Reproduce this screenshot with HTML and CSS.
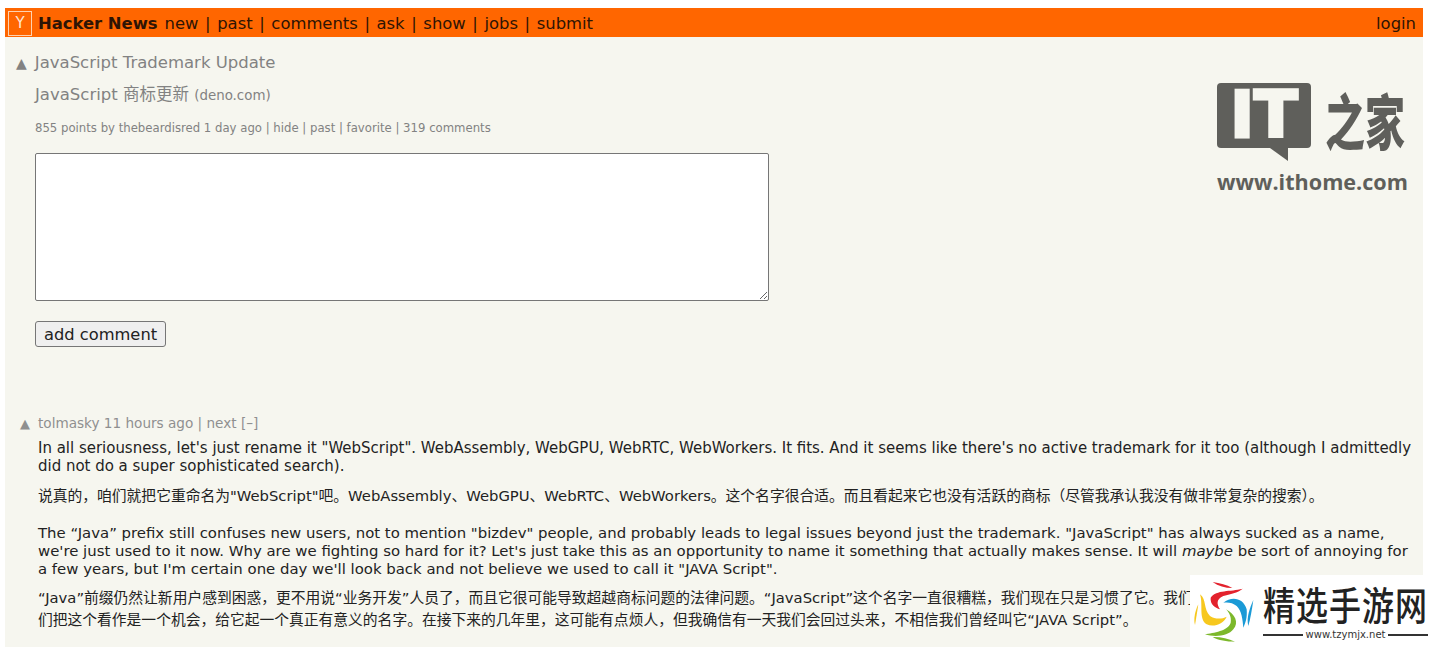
FILE: index.html
```html
<!DOCTYPE html>
<html lang="zh">
<head>
    <meta charset="UTF-8">
    <meta name="viewport" content="width=device-width, initial-scale=1.0">
    <title>JavaScript Trademark Update</title>
    <link rel="stylesheet" href="styles.css">
</head>
<body>
    <div class="page">
        <!-- top bar -->
        <div class="topbar">
            <span class="y-logo">Y</span>
            <b class="brand">Hacker News</b>
            <span class="nav">new | past | comments | ask | show | jobs | submit</span>
            <span class="login">login</span>
        </div>

        <!-- story -->
        <div class="story">
            <div class="story-title"><span class="arrow">▲</span>JavaScript Trademark Update</div>
            <div class="story-cn">JavaScript 商标更新 <span class="site">(deno.com)</span></div>
            <div class="subtext">855 points by thebeardisred 1 day ago | hide | past | favorite | 319 comments</div>
            <textarea class="reply-box"></textarea>
            <button class="add-btn">add comment</button>
        </div>

        <!-- comment -->
        <div class="comment">
            <div class="comment-head"><span class="arrow-small">▲</span>tolmasky 11 hours ago | next [–]</div>
            <div class="comment-body">
                <p class="en">In all seriousness, let's just rename it "WebScript". WebAssembly, WebGPU, WebRTC, WebWorkers. It fits. And it seems like there's no active trademark for it too (although I admittedly did not do a super sophisticated search).</p>
                <p class="cn cn-gap">说真的，咱们就把它重命名为"WebScript"吧。WebAssembly、WebGPU、WebRTC、WebWorkers。这个名字很合适。而且看起来它也没有活跃的商标（尽管我承认我没有做非常复杂的搜索）。</p>
                <p class="en en-tight">The “Java” prefix still confuses new users, not to mention "bizdev" people, and probably leads to legal issues beyond just the trademark. "JavaScript" has always sucked as a name, we're just used to it now. Why are we fighting so hard for it? Let's just take this as an opportunity to name it something that actually makes sense. It will <i>maybe</i> be sort of annoying for a few years, but I'm certain one day we'll look back and not believe we used to call it "JAVA Script".</p>
                <!-- the rest of this line is covered by the watermark in the screenshot -->
                <p class="cn">“Java”前缀仍然让新用户感到困惑，更不用说“业务开发”人员了，而且它很可能导致超越商标问题的法律问题。“JavaScript”这个名字一直很糟糕，我们现在只是习惯了它。我们<br>们把这个看作是一个机会，给它起一个真正有意义的名字。在接下来的几年里，这可能有点烦人，但我确信有一天我们会回过头来，不相信我们曾经叫它“JAVA Script”。</p>
            </div>
        </div>
    </div>

    <!-- watermarks -->
    <div class="ithome">
        <div class="ithome-top">
            <div class="bubble">IT</div>
            <span class="ithome-cn">之家</span>
        </div>
        <div class="ithome-url">www.ithome.com</div>
    </div>

    <div class="tzy">
        <svg class="tzy-icon" width="70" height="70" viewBox="0 0 210 210">
            <path d="M68 18 C90 22 110 26 127 36 C105 36 85 30 68 18Z" fill="#e3222d"/>
            <path d="M158 38 C120 48 80 40 62 65 C60 85 75 95 90 100 C80 85 78 70 100 60 C125 52 145 50 158 38Z" fill="#e3222d"/>
            <path d="M100 80 C125 60 160 65 170 100 C172 125 167 140 160 155 C158 130 155 105 140 90 C128 80 115 78 100 80Z" fill="#1a9ad6"/>
            <path d="M190 72 C180 95 168 125 175 150 C182 125 186 100 190 72Z" fill="#1a9ad6"/>
            <path d="M108 100 C135 115 148 140 130 160 C115 180 75 185 45 175 C70 170 115 165 122 140 C125 125 118 110 108 100Z" fill="#7cb82b"/>
            <path d="M68 183 C90 182 115 188 135 197 C110 197 85 193 68 183Z" fill="#7cb82b"/>
            <path d="M30 55 C50 70 40 100 60 120 C75 130 95 130 110 122 C100 145 70 155 50 145 C25 130 40 85 30 55Z" fill="#f7c81e"/>
            <path d="M25 85 C22 105 18 130 15 147 C10 130 15 105 25 85Z" fill="#f7c81e"/>
        </svg>
        <div class="tzy-text">
            <div class="tzy-name">精选手游网</div>
            <div class="tzy-url">www.tzymjx.net</div>
        </div>
    </div>
</body>
</html>
```

FILE: styles.css
```css
html, body {
    height: 100%;
}
body {
    margin: 0;
    padding: 8px 17px 0 5px;
    box-sizing: border-box;
    background-color: #fff;
    overflow: hidden;
    font-family: "DejaVu Sans", Verdana, "Noto Sans CJK SC", sans-serif;
    font-size: 15px;
}
.page {
    background-color: #f6f6ef;
    height: 100%;
}

/* top bar */
.topbar {
    display: flex;
    align-items: center;
    height: 29px;
    background-color: #ff6600;
    color: #2e1405;
    font-size: 16.4px;
    padding: 1px 7px 0 3px;
    box-sizing: border-box;
}
.y-logo {
    width: 22px;
    height: 23px;
    border: 1px solid #ffd2b0;
    color: #ffe6d5;
    font-size: 15px;
    text-align: center;
    line-height: 23px;
    margin-right: 6px;
}
.brand {
    margin-right: 7px;
    font-size: 16.4px;
}
.nav {
    word-spacing: 1.4px;
}
.login {
    margin-left: auto;
}

/* story */
.story {
    padding: 16px 0 0 30px;
    height: 356px;
    box-sizing: border-box;
    color: #828282;
}
.story-title {
    font-size: 16.5px;
    line-height: 20px;
}
.arrow {
    font-size: 14px;
    margin-left: -19px;
    margin-right: 8px;
}
.story-cn {
    font-size: 16.5px;
    line-height: 20px;
    margin-top: 12px;
}
.site {
    font-size: 13.4px;
}
.subtext {
    font-size: 11.7px;
    line-height: 14px;
    margin-top: 15px;
}
.reply-box {
    display: block;
    width: 734px;
    height: 148px;
    box-sizing: border-box;
    margin-top: 18px;
    border: 1px solid #767676;
    border-radius: 2px;
    background-color: #fff;
}
.add-btn {
    display: block;
    width: 131px;
    height: 26px;
    margin-top: 20px;
    padding: 0;
    font-family: inherit;
    font-size: 16.3px;
    color: #222;
    background-color: #efefef;
    border: 1px solid #767676;
    border-radius: 3px;
}

/* comment */
.comment {
    padding: 22px 5px 0 33px;
}
.comment-head {
    font-size: 13.6px;
    line-height: 16px;
    color: #8f8f8f;
}
.arrow-small {
    font-size: 13px;
    margin-left: -18px;
    margin-right: 8px;
}
.comment-body {
    margin-top: 7px;
    font-size: 14.98px;
    line-height: 18px;
    color: #222;
}
.comment-body p {
    margin: 0;
}
.comment-body .en {
    margin-bottom: 10px;
}
.comment-body .en-tight {
    font-size: 14.9px;
    margin-bottom: 9px;
}
.cn {
    font-size: 14.78px;
    line-height: 22px;
}
.comment-body .cn-gap {
    margin-bottom: 17px;
}

/* watermarks */
.ithome {
    position: absolute;
    left: 1217px;
    top: 83px;
    width: 192px;
    color: #5f5f5b;
}
.ithome-top {
    display: flex;
    align-items: flex-start;
}
.bubble {
    position: relative;
    width: 94px;
    height: 65px;
    background-color: #5f5f5b;
    border-radius: 4px;
    color: #f6f6ef;
    font-family: "DejaVu Sans", sans-serif;
    font-weight: bold;
    font-size: 64px;
    line-height: 65px;
    text-align: center;
    -webkit-text-stroke: 3px #f6f6ef;
}
.bubble::after {
    content: "";
    position: absolute;
    left: 53px;
    top: 65px;
    border-top: 13px solid #5f5f5b;
    border-left: 18px solid transparent;
}
.ithome-cn {
    margin-left: 14px;
    font-family: "Noto Sans CJK SC", sans-serif;
    font-weight: 900;
    font-size: 40px;
    line-height: 72px;
    white-space: nowrap;
    transform: scaleY(1.5);
    transform-origin: center;
}
.ithome-url {
    margin-top: 14px;
    font-family: "Open Sans", sans-serif;
    font-weight: 700;
    font-size: 21.6px;
    line-height: 26px;
    white-space: nowrap;
}
.tzy {
    position: absolute;
    left: 1190px;
    top: 575px;
    width: 238px;
    height: 72px;
    background-color: #fff;
    display: flex;
    align-items: center;
}
.tzy-icon {
    flex: none;
}
.tzy-text {
    margin-left: 3px;
    width: 165px;
}
.tzy-name {
    font-family: "Noto Sans CJK SC", sans-serif;
    font-weight: 500;
    font-size: 32px;
    line-height: 42px;
    letter-spacing: 1px;
    color: #222;
    white-space: nowrap;
    transform: scaleY(1.2);
}
.tzy-url {
    display: flex;
    align-items: center;
    gap: 3px;
    margin-top: 5px;
    font-family: "DejaVu Sans", sans-serif;
    font-size: 10px;
    line-height: 12px;
    color: #333;
}
.tzy-url::before, .tzy-url::after {
    content: "";
    flex: 1;
    height: 2px;
    background-color: #333;
}
```
